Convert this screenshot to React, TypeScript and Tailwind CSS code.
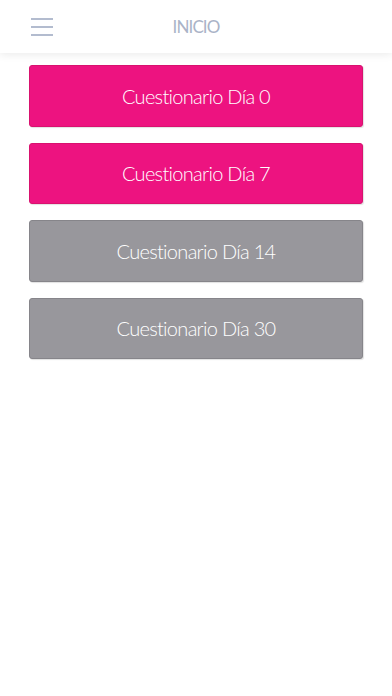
import React from "react";

const items = [
  { label: "Cuestionario Día 0", active: true },
  { label: "Cuestionario Día 7", active: true },
  { label: "Cuestionario Día 14", active: false },
  { label: "Cuestionario Día 30", active: false },
];

export default function App() {
  return (
    <div className="min-h-[696px] w-full bg-white" style={{ fontFamily: "Lato, 'Open Sans', sans-serif" }}>
      <header className="relative z-10 flex h-[53px] items-center bg-white shadow-[0_2px_8px_rgba(0,0,0,0.08)]">
        <button className="ml-[31px] flex w-[22px] flex-col gap-[6px]">
          <span className="block h-[2px] w-full bg-[#b3bccf]" />
          <span className="block h-[2px] w-full bg-[#b3bccf]" />
          <span className="block h-[2px] w-full bg-[#b3bccf]" />
        </button>
        <div className="pointer-events-none absolute left-0 right-0 top-0 flex h-[53px] items-center justify-center">
          <span className="text-[17px] tracking-[-0.9px] text-[#aab3c7]">INICIO</span>
        </div>
      </header>
      <main className="flex flex-col gap-[16px] px-[29px] pt-[12px]">
        {items.map((it) => (
          <button
            key={it.label}
            className={
              it.active
                ? "flex h-[61.5px] w-full items-center justify-center rounded-[3px] border border-[#d8126f] bg-[#ed1380] text-[20px] font-light tracking-[-0.7px] text-white shadow-[1px_1px_1px_rgba(0,0,0,0.12)]"
                : "flex h-[61.5px] w-full items-center justify-center rounded-[3px] border border-[#86858a] bg-[#98979c] text-[20px] font-light tracking-[-0.7px] text-white shadow-[1px_1px_1px_rgba(0,0,0,0.12)]"
            }
          >
            {it.label}
          </button>
        ))}
      </main>
    </div>
  );
}
